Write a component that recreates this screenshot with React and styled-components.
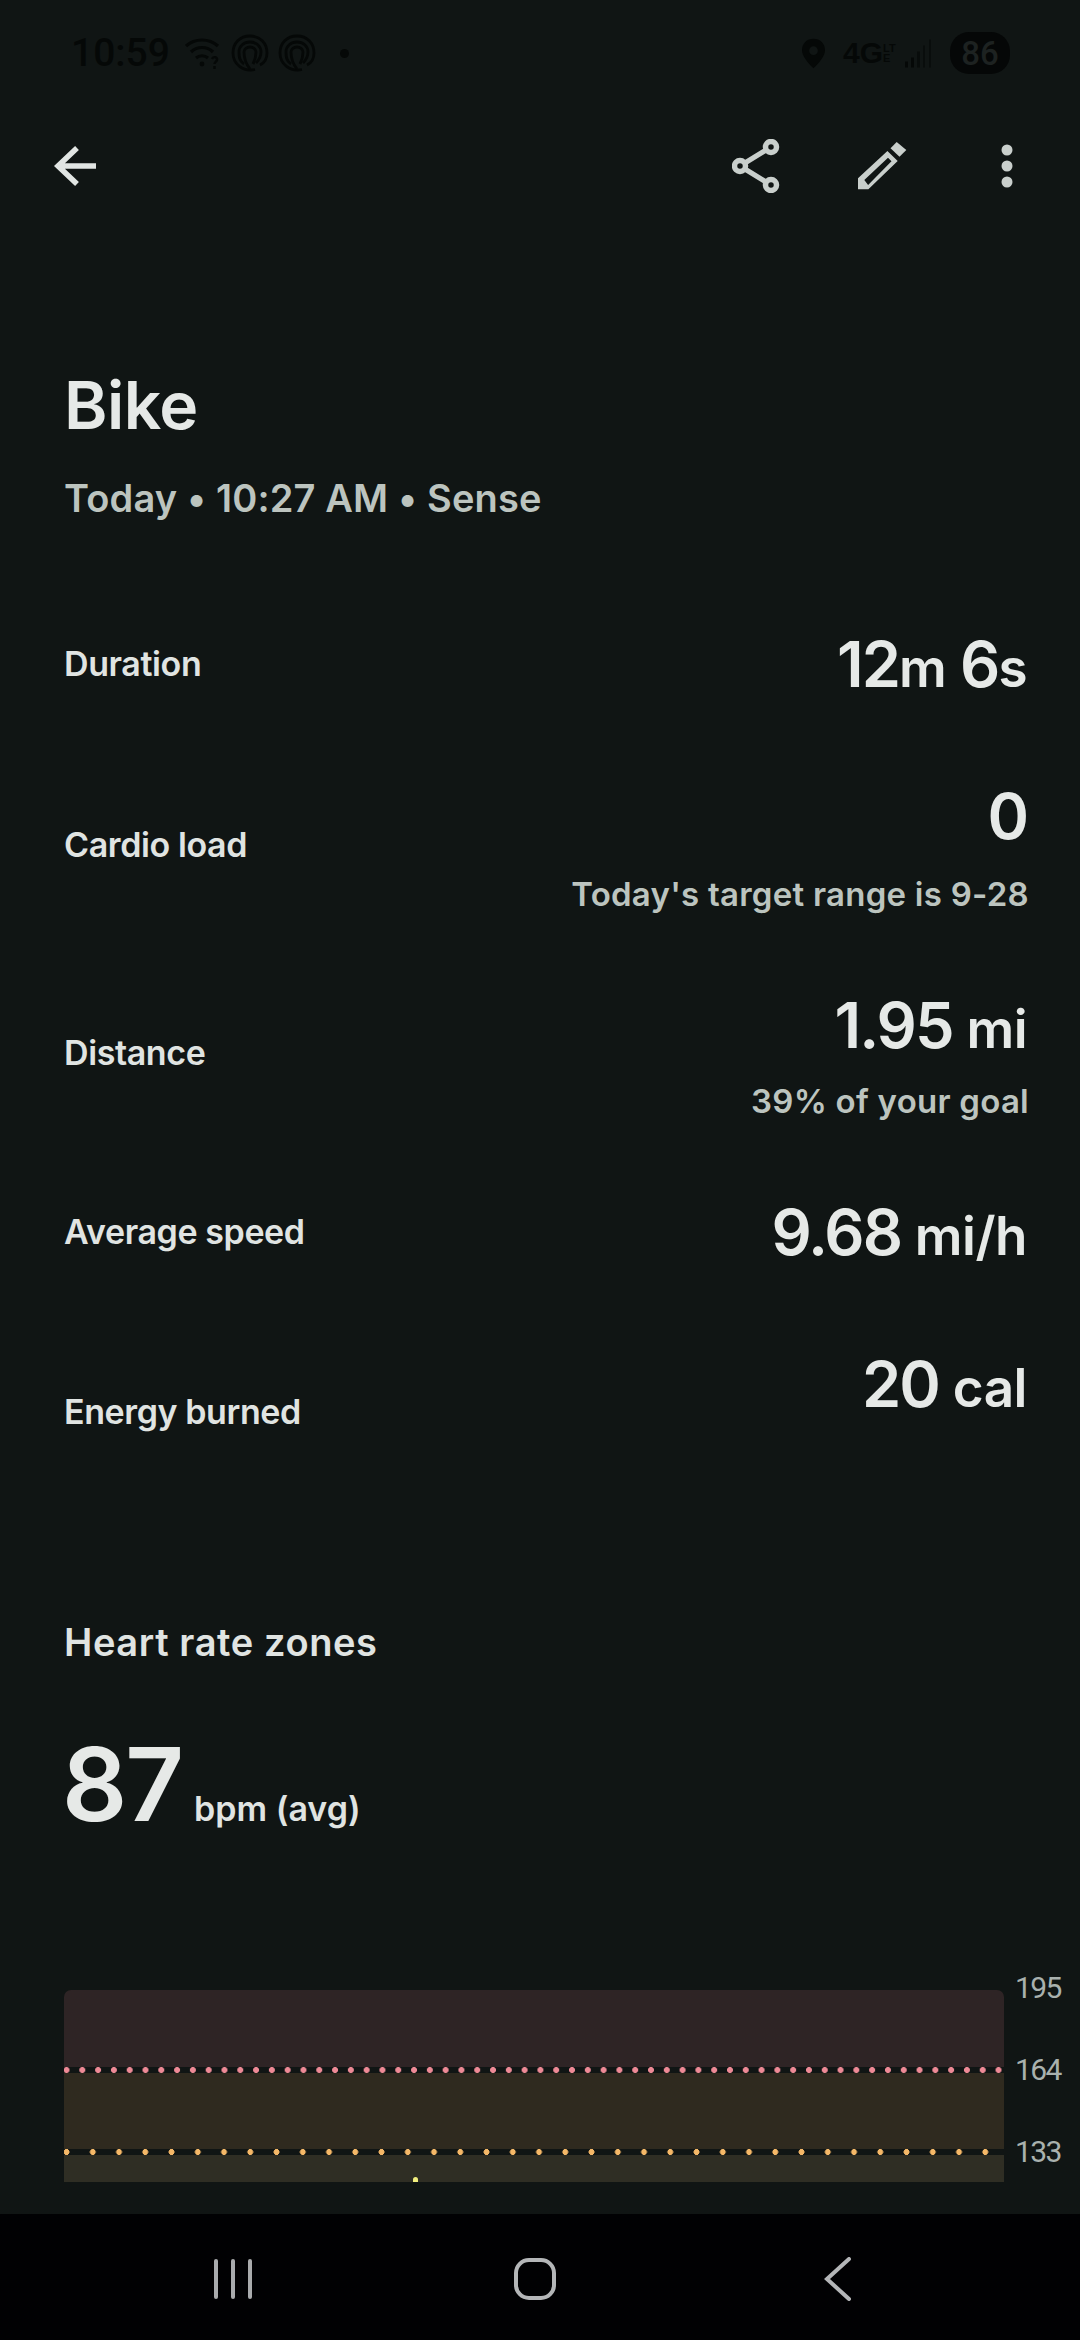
import React from "react";
import styled, { createGlobalStyle } from "styled-components";

const GlobalStyle = createGlobalStyle`
  html, body {
    margin: 0;
    padding: 0;
    background: #101514;
  }
  * {
    box-sizing: border-box;
  }
`;

const Page = styled.div`
  width: 1080px;
  height: 2340px;
  display: flex;
  flex-direction: column;
  overflow: hidden;
  background: #101514;
  font-family: "Inter", "Noto Sans", sans-serif;
`;

const Content = styled.main`
  flex: 1;
  min-height: 0;
  overflow: hidden;
`;

const StatusBar = styled.div`
  height: 104px;
  padding: 32px 70px 30px 71px;
  display: flex;
  justify-content: space-between;
  align-items: center;
  color: #050807;
`;

const StatusGroup = styled.div`
  display: flex;
  align-items: center;
`;

const Clock = styled.span`
  font-family: "Roboto", sans-serif;
  font-size: 39px;
  font-weight: 500;
  line-height: 42px;
  margin-right: 15px;
`;

const NetworkLabel = styled.span`
  font-family: "Liberation Sans", sans-serif;
  font-size: 30px;
  font-weight: 700;
  line-height: 28px;
  letter-spacing: 0;
  margin-left: 18px;
`;

const NetworkSuffix = styled.span`
  width: 13px;
  margin: 0 9px 0 0;
  font-family: "Liberation Sans", sans-serif;
  font-size: 11px;
  font-weight: 700;
  line-height: 10px;
`;

const Battery = styled.span`
  width: 60px;
  height: 42px;
  margin-left: 18px;
  border-radius: 19px;
  background: #050707;
  color: #1d2221;
  font-family: "Roboto", sans-serif;
  font-size: 33px;
  font-weight: 500;
  display: flex;
  align-items: center;
  justify-content: center;
`;

const Toolbar = styled.nav`
  height: 122px;
  padding: 2px 0 0 54px;
  display: flex;
  align-items: center;
  justify-content: space-between;
`;

const ToolbarActions = styled.div`
  display: flex;
  align-items: center;
  padding-right: 67px;
`;

const Heading = styled.header`
  padding: 143px 0 0 64px;
`;

const Title = styled.h1`
  margin: 0;
  font-size: 66px;
  font-weight: 600;
  line-height: 72px;
  letter-spacing: -0.5px;
  color: #e6e9e7;
`;

const Subtitle = styled.p`
  margin: 33px 0 0;
  font-size: 38px;
  font-weight: 600;
  line-height: 48px;
  letter-spacing: 0.15px;
  color: #bcc4bf;
`;

const StatList = styled.section`
  margin-top: 80px;
  padding: 0 51px 0 64px;
`;

const StatRow = styled.div`
  height: ${({ $height }) => $height}px;
  display: flex;
  justify-content: space-between;
  align-items: center;
`;

const StatLabel = styled.span`
  font-size: 34px;
  font-weight: 600;
  line-height: 40px;
  letter-spacing: -0.4px;
  padding-top: 2px;
  color: #e0e4e2;
`;

const StatValues = styled.div`
  display: flex;
  flex-direction: column;
  align-items: flex-end;
`;

const StatNumber = styled.div`
  font-size: 63px;
  font-weight: 600;
  line-height: 72px;
  letter-spacing: -2px;
  margin: 6px 2px 0 0;
  color: #e6e9e7;
`;

const StatUnit = styled.span`
  font-size: 53px;
  letter-spacing: -0.5px;
`;

const StatNote = styled.div`
  min-height: 42px;
  margin-top: ${({ $gap }) => $gap}px;
  font-size: 33px;
  font-weight: 600;
  line-height: 42px;
  letter-spacing: 0.25px;
  color: #bcc4bf;
`;

const ZoneSection = styled.section`
  margin-top: 118px;
  padding: 0 0 0 64px;
`;

const ZoneTitle = styled.h2`
  margin: 0;
  font-size: 38px;
  font-weight: 600;
  line-height: 48px;
  letter-spacing: 0.6px;
  color: #e0e4e2;
`;

const AverageRow = styled.div`
  margin-top: 58px;
  display: flex;
  align-items: baseline;
  gap: 12px;
`;

const AverageValue = styled.span`
  font-size: 102px;
  font-weight: 600;
  line-height: 120px;
  letter-spacing: -2px;
  margin-left: -2px;
  color: #e6e9e7;
`;

const AverageUnit = styled.span`
  font-size: 34px;
  font-weight: 600;
  color: #e0e4e2;
`;

const ChartRow = styled.div`
  margin-top: 103px;
  display: flex;
  align-items: flex-start;
`;

const ChartPlot = styled.div`
  width: 940px;
  margin-top: 43px;
  display: flex;
  flex-direction: column;
  position: relative;
  border-radius: 7px 7px 0 0;
  overflow: hidden;
`;

const ZoneBand = styled.div`
  height: ${({ $height }) => $height}px;
  background: ${({ $color }) => $color};
`;

const ZoneLine = styled.div`
  height: 6px;
  margin: -0.5px 0;
  position: relative;
  background-color: #101514;
  background-image: radial-gradient(
    circle,
    ${({ $color }) => $color} 2.7px,
    transparent 3.2px
  );
  background-size: ${({ $gap }) => $gap}px 6px;
  background-position: ${({ $offset }) => $offset}px center;
`;

const ZoneMarker = styled.span`
  position: absolute;
  left: 349px;
  bottom: 0;
  width: 5px;
  height: 5px;
  border-radius: 3px 3px 0 0;
  background: #f2ef7e;
`;

const ZoneAxis = styled.div`
  margin-left: 11px;
  display: flex;
  flex-direction: column;
`;

const AxisLabel = styled.span`
  font-family: "Roboto", sans-serif;
  font-size: 30px;
  line-height: 82px;
  letter-spacing: -1.6px;
  color: #a9b1ae;
`;

const NavBar = styled.nav`
  height: 126px;
  flex-shrink: 0;
  background: #010103;
  display: flex;
  align-items: center;
  padding: 4px 0 0 214px;
`;

const Icon = styled.svg`
  display: block;
  flex-shrink: 0;
  margin-left: ${({ $left }) => $left || 0}px;
`;

const ZONE_LINE_PINK = "#ee8a96";
const ZONE_LINE_ORANGE = "#f5b868";

const STATS = [
  { label: "Duration", height: 122, value: <>12<StatUnit>m</StatUnit> 6<StatUnit>s</StatUnit></> },
  { label: "Cardio load", height: 240, value: "0", note: "Today's target range is 9-28", noteGap: 21 },
  { label: "Distance", height: 176, value: <>1.95 <StatUnit>mi</StatUnit></>, note: "39% of your goal", noteGap: 15 },
  { label: "Average speed", height: 182, value: <>9.68 <StatUnit>mi/h</StatUnit></> },
  { label: "Energy burned", height: 178, value: <>20 <StatUnit>cal</StatUnit></>, note: "\u00a0", noteGap: 15 },
];

const WifiIcon = () => (
  <Icon width="36" height="36" viewBox="0 0 36 36" fill="none" stroke="currentColor" strokeWidth="3.2">
    <path d="M1 11c9-8 23-8 32 0" />
    <path d="M6 17c6-6 16-6 22 0" />
    <path d="M11 23c3.500-3 8.500-3 12 0" />
    <circle cx="17" cy="29" r="2.400" fill="currentColor" stroke="none" />
    <path d="M27 24c1-3 6-2 5 1-.5 1.500-2.500 2-2.500 4M29.500 31v3" strokeWidth="2.400" />
  </Icon>
);

const RingIcon = ({ left }) => (
  <Icon $left={left} width="38" height="38" viewBox="0 0 38 38" fill="none" stroke="currentColor" strokeWidth="2.800">
    <path d="M24 35.500C12 38 2 30 2 19 2 9 9 2 19 2s17 7 17 17c0 6-3 10-7 12" />
    <path d="M13 30C8 27 8 22 8 18 8 12 13 8 19 8s11 4 11 10c0 5-2 8-5 11" />
    <path d="M19 35c-4-5-6-11-6-17 0-3 3-5 6-5s6 2 6 5c0 4-1 8-3 12" />
  </Icon>
);

const StatusDot = () => (
  <Icon $left={24} width="9" height="9" viewBox="0 0 8 8">
    <circle cx="4" cy="4" r="4" fill="currentColor" />
  </Icon>
);

const PinIcon = () => (
  <Icon width="23" height="31" viewBox="0 0 24 31">
    <path
      fillRule="evenodd"
      fill="currentColor"
      d="M12 0c7 0 12 5 12 12 0 6-6 13-12 19C6 25 0 18 0 12 0 5 5 0 12 0zm0 8a4.500 4.500 0 1 0 0 9 4.500 4.500 0 0 0 0-9z"
    />
  </Icon>
);

const SignalIcon = () => (
  <Icon width="27" height="29" viewBox="0 0 27 28" fill="currentColor">
    <rect x="0" y="22" width="3" height="6" />
    <rect x="6" y="18" width="3" height="10" />
    <rect x="12" y="12" width="3" height="16" opacity="0.7" />
    <rect x="18" y="6" width="2" height="22" opacity="0.6" />
    <rect x="24" y="0" width="2" height="28" opacity="0.6" />
  </Icon>
);

const BackIcon = () => (
  <Icon width="44" height="44" viewBox="0 0 44 44" fill="none" stroke="#e1e5e3" strokeWidth="5.500">
    <path d="M23 4L4 22l19 18M4 22h38" />
  </Icon>
);

const ShareIcon = () => (
  <Icon width="48" height="54" viewBox="0 0 48 54" fill="none" stroke="#c9cfcc">
    <path d="M8 27L39 8M8 27l31 19" strokeWidth="5" />
    <circle cx="39" cy="8" r="5.500" strokeWidth="5.500" fill="#101514" />
    <circle cx="8" cy="27" r="5.500" strokeWidth="5.500" fill="#101514" />
    <circle cx="39" cy="46" r="5.500" strokeWidth="5.500" fill="#101514" />
  </Icon>
);

const PencilIcon = () => (
  <Icon $left={78} width="49" height="48" viewBox="0 0 49 48" fill="#c9cfcc">
    <path d="M38.700 0l9.600 8-6.800 6.700-9-8.400z" />
    <path
      fillRule="evenodd"
      d="M29.400 9l10.300 10-29.300 28.300H0v-11zM30 15.700L6.300 38l3.800 5L33.500 19.300z"
    />
  </Icon>
);

const MoreIcon = () => (
  <Icon $left={94} width="12" height="44" viewBox="0 0 12 44" fill="#c9cfcc">
    <circle cx="6" cy="6" r="5.500" />
    <circle cx="6" cy="22" r="5.500" />
    <circle cx="6" cy="38" r="5.500" />
  </Icon>
);

const RecentsIcon = () => (
  <Icon width="38" height="42" viewBox="0 0 38 42" fill="#a9abad">
    <rect x="0" y="1" width="4" height="40" rx="2" />
    <rect x="17" y="1" width="4" height="40" rx="2" />
    <rect x="34" y="1" width="4" height="40" rx="2" />
  </Icon>
);

const HomeIcon = () => (
  <Icon $left={262} width="42" height="42" viewBox="0 0 42 42" fill="none" stroke="#b4b6b8" strokeWidth="4">
    <rect x="2" y="2" width="38" height="38" rx="13" />
  </Icon>
);

const NavBackIcon = () => (
  <Icon $left={268} width="28" height="44" viewBox="0 0 28 44" fill="none" stroke="#b4b6b8" strokeWidth="4" strokeLinecap="round">
    <path d="M25 2L3 22l22 20" />
  </Icon>
);

export default function App() {
  return (
    <>
      <GlobalStyle />
      <Page>
        <Content>
          <StatusBar>
            <StatusGroup>
              <Clock>10:59</Clock>
              <WifiIcon />
              <RingIcon left={10} />
              <RingIcon left={9} />
              <StatusDot />
            </StatusGroup>
            <StatusGroup>
              <PinIcon />
              <NetworkLabel>4G</NetworkLabel>
              <NetworkSuffix>LT E</NetworkSuffix>
              <SignalIcon />
              <Battery>86</Battery>
            </StatusGroup>
          </StatusBar>

          <Toolbar>
            <BackIcon />
            <ToolbarActions>
              <ShareIcon />
              <PencilIcon />
              <MoreIcon />
            </ToolbarActions>
          </Toolbar>

          <Heading>
            <Title>Bike</Title>
            <Subtitle>Today • 10:27 AM • Sense</Subtitle>
          </Heading>

          <StatList>
            {STATS.map((stat) => (
              <StatRow key={stat.label} $height={stat.height}>
                <StatLabel>{stat.label}</StatLabel>
                <StatValues>
                  <StatNumber>{stat.value}</StatNumber>
                  {stat.note && <StatNote $gap={stat.noteGap}>{stat.note}</StatNote>}
                </StatValues>
              </StatRow>
            ))}
          </StatList>

          <ZoneSection>
            <ZoneTitle>Heart rate zones</ZoneTitle>
            <AverageRow>
              <AverageValue>87</AverageValue>
              <AverageUnit>bpm (avg)</AverageUnit>
            </AverageRow>
            <ChartRow>
              <ChartPlot>
                <ZoneBand $height={77} $color="#2e2425" />
                <ZoneLine $color={ZONE_LINE_PINK} $gap={15.8} $offset={-5.4} />
                <ZoneBand $height={77} $color="#2f2a1f" />
                <ZoneLine $color={ZONE_LINE_ORANGE} $gap={26.25} $offset={-10.6} />
                <ZoneBand $height={28} $color="#2f2e24" />
                <ZoneMarker />
              </ChartPlot>
              <ZoneAxis>
                <AxisLabel>195</AxisLabel>
                <AxisLabel>164</AxisLabel>
                <AxisLabel>133</AxisLabel>
              </ZoneAxis>
            </ChartRow>
          </ZoneSection>
        </Content>

        <NavBar>
          <RecentsIcon />
          <HomeIcon />
          <NavBackIcon />
        </NavBar>
      </Page>
    </>
  );
}
